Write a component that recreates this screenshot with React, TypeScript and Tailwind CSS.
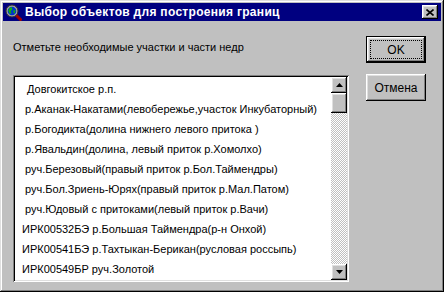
import React from "react";

const raised =
  "shadow-[inset_-1px_-1px_#000,inset_1px_1px_#fff,inset_-2px_-2px_#808080,inset_2px_2px_#dfdfdf]";

const items: { t: string; pl: string }[] = [
  { t: "Довгокитское р.п.", pl: "pl-[12px]" },
  { t: "р.Аканак-Накатами(левобережье,участок Инкубаторный)", pl: "pl-[10px]" },
  { t: "р.Богодикта(долина нижнего левого притока )", pl: "pl-[10px]" },
  { t: "р.Явальдин(долина, левый приток р.Хомолхо)", pl: "pl-[10px]" },
  { t: "руч.Березовый(правый приток р.Бол.Таймендры)", pl: "pl-[10px]" },
  { t: "руч.Бол.Зриень-Юрях(правый приток р.Мал.Патом)", pl: "pl-[10px]" },
  { t: "руч.Юдовый с притоками(левый приток р.Вачи)", pl: "pl-[10px]" },
  { t: "ИРК00532БЭ р.Большая Таймендра(р-н Онхой)", pl: "pl-[7px]" },
  { t: "ИРК00541БЭ р.Тахтыкан-Берикан(русловая россыпь)", pl: "pl-[7px]" },
  { t: "ИРК00549БР руч.Золотой", pl: "pl-[7px]" },
];

function GlobeIcon() {
  return (
    <svg width="17" height="17" viewBox="0 0 17 17">
      <path d="M11 11 L15.5 15.5" stroke="#a00000" strokeWidth="3" strokeLinecap="round" />
      <circle cx="7" cy="7" r="6" fill="#a0a0a0" stroke="#303030" strokeWidth="1" />
      <circle cx="7" cy="7" r="4.3" fill="#0030d0" />
      <path d="M4.5 4 L6.5 3 L7.5 5.2 L5.6 7.2 L6.6 9.6 L4.4 9.4 L3.2 6.4 Z" fill="#10b010" />
      <path d="M8.4 6.2 L10.6 6.2 L9.6 9.6 L8.4 8.6 Z" fill="#10b010" />
    </svg>
  );
}

export default function App() {
  return (
    <div
      className="w-[444px] h-[292px] bg-[#c0c0c0] p-[3px] flex flex-col shadow-[inset_-1px_-1px_#000,inset_1px_1px_#dfdfdf,inset_-2px_-2px_#808080,inset_2px_2px_#fff]"
      style={{ fontFamily: '"Liberation Sans", Arial, sans-serif' }}
    >
      {/* Title bar */}
      <div className="h-[18px] bg-[#000080] flex items-center pl-[2px] pr-[3px]">
        <GlobeIcon />
        <span className="ml-[3px] text-white font-bold text-[12px] leading-none tracking-[0.3px]">
          Выбор объектов для построения границ
        </span>
        <div className="flex-1" />
        <div className={`w-[16px] h-[14px] bg-[#c0c0c0] flex items-center justify-center ${raised}`}>
          <svg width="8" height="7" viewBox="0 0 8 7">
            <path d="M0.5 0.5 L7.5 6.5 M7.5 0.5 L0.5 6.5" stroke="#000" strokeWidth="1.6" />
          </svg>
        </div>
      </div>

      {/* Body */}
      <div className="flex pl-[10px]">
        <div className="flex flex-col w-[336px]">
          <div className="pt-[20px] text-[11px] leading-[13px] text-black">
            Отметьте необходимые участки и части недр
          </div>
          <div className="mt-[21px] h-[207px] bg-white p-[2px] flex shadow-[inset_1px_1px_#808080,inset_-1px_-1px_#fff,inset_2px_2px_#000,inset_-2px_-2px_#dfdfdf]">
            <div className="flex-1 pt-[2px] overflow-hidden">
              {items.map((it, i) => (
                <div
                  key={i}
                  className={`h-[20px] flex items-center whitespace-nowrap text-[11px] text-black ${it.pl}`}
                >
                  {it.t}
                </div>
              ))}
            </div>
            <div className="w-[16px] flex flex-col">
              <div className={`h-[16px] bg-[#c0c0c0] flex items-center justify-center ${raised}`}>
                <svg width="7" height="4" viewBox="0 0 7 4">
                  <path d="M3.5 0 L7 4 L0 4 Z" fill="#000" />
                </svg>
              </div>
              <div className={`h-[20px] bg-[#c0c0c0] ${raised}`} />
              <div className="flex-1 bg-[repeating-conic-gradient(#c0c0c0_0_25%,#fff_0_50%)] bg-[length:2px_2px]" />
              <div className={`h-[16px] bg-[#c0c0c0] flex items-center justify-center ${raised}`}>
                <svg width="7" height="4" viewBox="0 0 7 4">
                  <path d="M0 0 L7 0 L3.5 4 Z" fill="#000" />
                </svg>
              </div>
            </div>
          </div>
        </div>

        <div className="ml-[17px] pt-[15px] flex flex-col w-[60px]">
          <div className="h-[27px] bg-[#c0c0c0] border border-black p-[3px] shadow-[inset_-1px_-1px_#000,inset_1px_1px_#fff,inset_-2px_-2px_#808080,inset_2px_2px_#dfdfdf]">
            <div className="h-full w-full border border-dotted border-black flex items-center justify-center text-[12px] text-black">
              OK
            </div>
          </div>
          <div className={`mt-[11px] h-[27px] bg-[#c0c0c0] flex items-center justify-center text-[12px] text-black ${raised}`}>
            Отмена
          </div>
        </div>
      </div>
    </div>
  );
}
